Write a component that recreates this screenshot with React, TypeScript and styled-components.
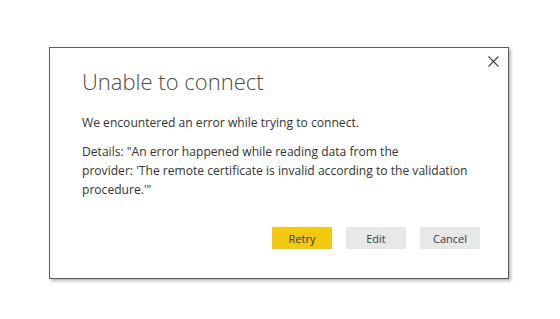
import React from "react";
import styled, { createGlobalStyle } from "styled-components";

const Global = createGlobalStyle`
  html, body { margin: 0; padding: 0; background: #ffffff; }
  body { font-family: "Open Sans", "Noto Sans", sans-serif; }
`;

const Page = styled.div`
  width: 560px;
  height: 319px;
  padding: 47px 0 0 49px;
  box-sizing: border-box;
`;

const Dialog = styled.div`
  position: relative;
  width: 460px;
  height: 232px;
  box-sizing: border-box;
  border: 1px solid #5a5a5a;
  background: #ffffff;
  box-shadow: 2px 2px 3px rgba(0, 0, 0, 0.28);
  padding: 19px 28px 0 32px;
  display: flex;
  flex-direction: column;
`;

const Close = styled.button`
  position: absolute;
  top: 5px;
  right: 7px;
  width: 16px;
  height: 16px;
  padding: 0;
  border: none;
  background: transparent;
  display: flex;
  align-items: center;
  justify-content: center;
  cursor: pointer;
`;

const Title = styled.h1`
  margin: 0;
  font-family: "Open Sans", "Noto Sans", sans-serif;
  font-weight: 300;
  font-size: 22px;
  line-height: 29px;
  color: #4a4a4a;
`;

const Text = styled.p<{ $top: number }>`
  margin: ${(p) => p.$top}px 0 0 0;
  font-size: 12.1px;
  line-height: 19px;
  color: #333333;
`;

const Actions = styled.div`
  margin-top: auto;
  margin-bottom: 29px;
  display: flex;
  justify-content: flex-end;
  gap: 14px;
`;

const Button = styled.button<{ $primary?: boolean }>`
  width: 60px;
  height: 22px;
  border: none;
  padding: 0;
  font-family: "Open Sans", "Noto Sans", sans-serif;
  font-size: 11px;
  color: #3a3a3a;
  background: ${(p) => (p.$primary ? "#f2c811" : "#e8e8e8")};
  cursor: pointer;
`;

export default function App() {
  return (
    <>
      <Global />
      <Page>
        <Dialog>
          <Close aria-label="Close">
            <svg width="11" height="11" viewBox="0 0 11 11">
              <path d="M0.5 0.5 L10.5 10.5 M10.5 0.5 L0.5 10.5" stroke="#444" strokeWidth="1.1" />
            </svg>
          </Close>
          <Title>Unable to connect</Title>
          <Text $top={17}>We encountered an error while trying to connect.</Text>
          <Text $top={10}>
            Details: "An error happened while reading data from the
            <br />
            provider: 'The remote certificate is invalid according to the validation
            <br />
            procedure.'"
          </Text>
          <Actions>
            <Button $primary>Retry</Button>
            <Button>Edit</Button>
            <Button>Cancel</Button>
          </Actions>
        </Dialog>
      </Page>
    </>
  );
}
